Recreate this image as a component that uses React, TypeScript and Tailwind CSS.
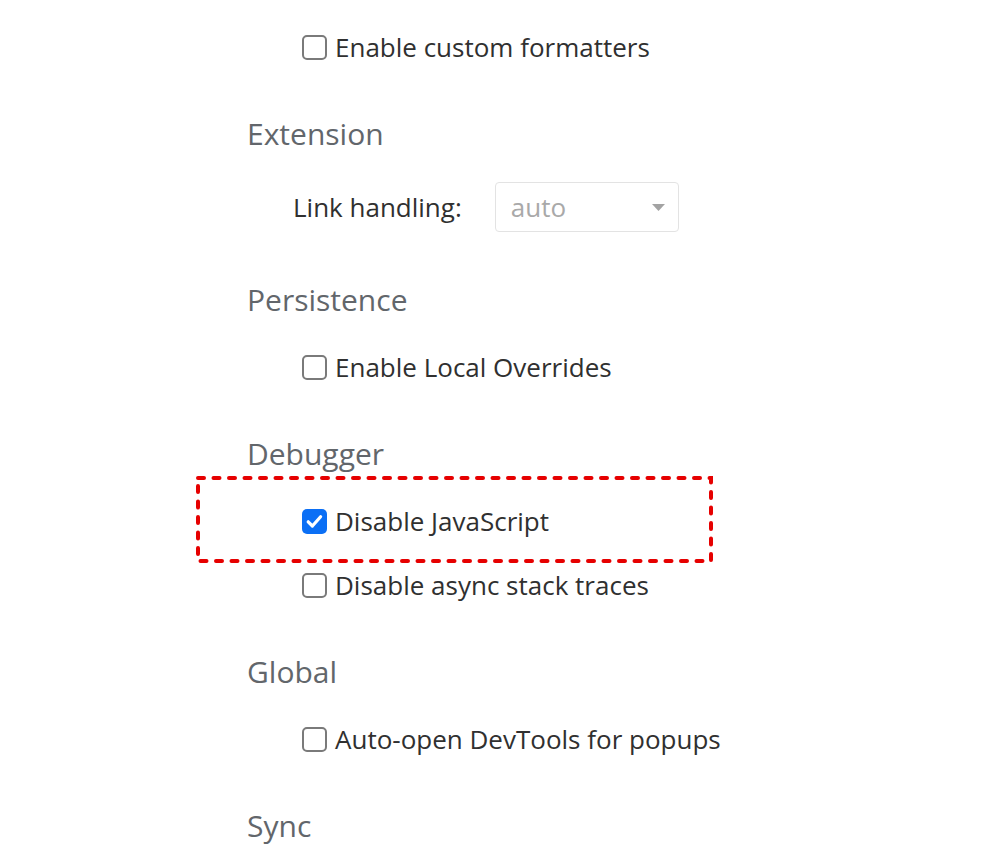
import React from 'react';

const font = { fontFamily: '"Open Sans", "Noto Sans", Arial, sans-serif' };

function Checkbox({ checked = false }: { checked?: boolean }) {
  if (checked) {
    return (
      <span className="flex h-[25px] w-[25px] shrink-0 items-center justify-center rounded-[5px] bg-[#0b6ff5]">
        <svg width="19" height="19" viewBox="0 0 19 19" fill="none">
          <path d="M3.2 9.8 L7.4 14 L15.6 4.8" stroke="#ffffff" strokeWidth="3.2" strokeLinecap="round" strokeLinejoin="round" />
        </svg>
      </span>
    );
  }
  return <span className="h-[25px] w-[25px] shrink-0 rounded-[5px] border-2 border-[#7a7a7a] bg-white" />;
}

function CheckRow({ label, checked }: { label: string; checked?: boolean }) {
  return (
    <div className="flex h-16 items-center gap-[8px] pl-[55px] text-[26px] text-[#303030]">
      <Checkbox checked={checked} />
      <span className="leading-none">{label}</span>
    </div>
  );
}

function Heading({ children }: { children: React.ReactNode }) {
  return (
    <div className="mt-[34px] mb-[16px] flex h-10 items-center text-[30px] text-[#62666b]">
      {children}
    </div>
  );
}

export default function App() {
  return (
    <div className="h-[864px] w-[986px] overflow-hidden bg-white" style={font}>
      <div className="mt-[-49px] flex flex-col pl-[247px]">
        {/* Console (tail) */}
        <CheckRow label="Preserve log upon navigation" />
        <CheckRow label="Enable custom formatters" />

        <Heading>Extension</Heading>
        <div className="flex h-[76px] items-center pl-[46px] text-[26px] text-[#303030]">
          <span>Link handling:</span>
          <div className="ml-[33px] flex h-[50px] w-[184px] items-center justify-between rounded-[4px] border border-[#e3e3e3] bg-white pl-[15px] pr-[13px] text-[#a9a9a9]">
            <span>auto</span>
            <svg width="13" height="7" viewBox="0 0 13 7">
              <path d="M0 0 L13 0 L6.5 7 Z" fill="#a3a3a3" />
            </svg>
          </div>
        </div>

        <Heading>Persistence</Heading>
        <CheckRow label="Enable Local Overrides" />

        <Heading>Debugger</Heading>
        <div className="relative">
          <CheckRow label="Disable JavaScript" checked />
          {/* annotation frame */}
          <svg className="pointer-events-none absolute left-[-51px] top-[-13px]" width="517" height="87" viewBox="0 0 517 87">
            <rect x="2" y="2" width="513" height="83" fill="none" stroke="#e60000" strokeWidth="4" strokeDasharray="6 9.5" strokeLinecap="round" />
          </svg>
        </div>
        <CheckRow label="Disable async stack traces" />

        <Heading>Global</Heading>
        <CheckRow label="Auto-open DevTools for popups" />

        <Heading>Sync</Heading>
      </div>
    </div>
  );
}
